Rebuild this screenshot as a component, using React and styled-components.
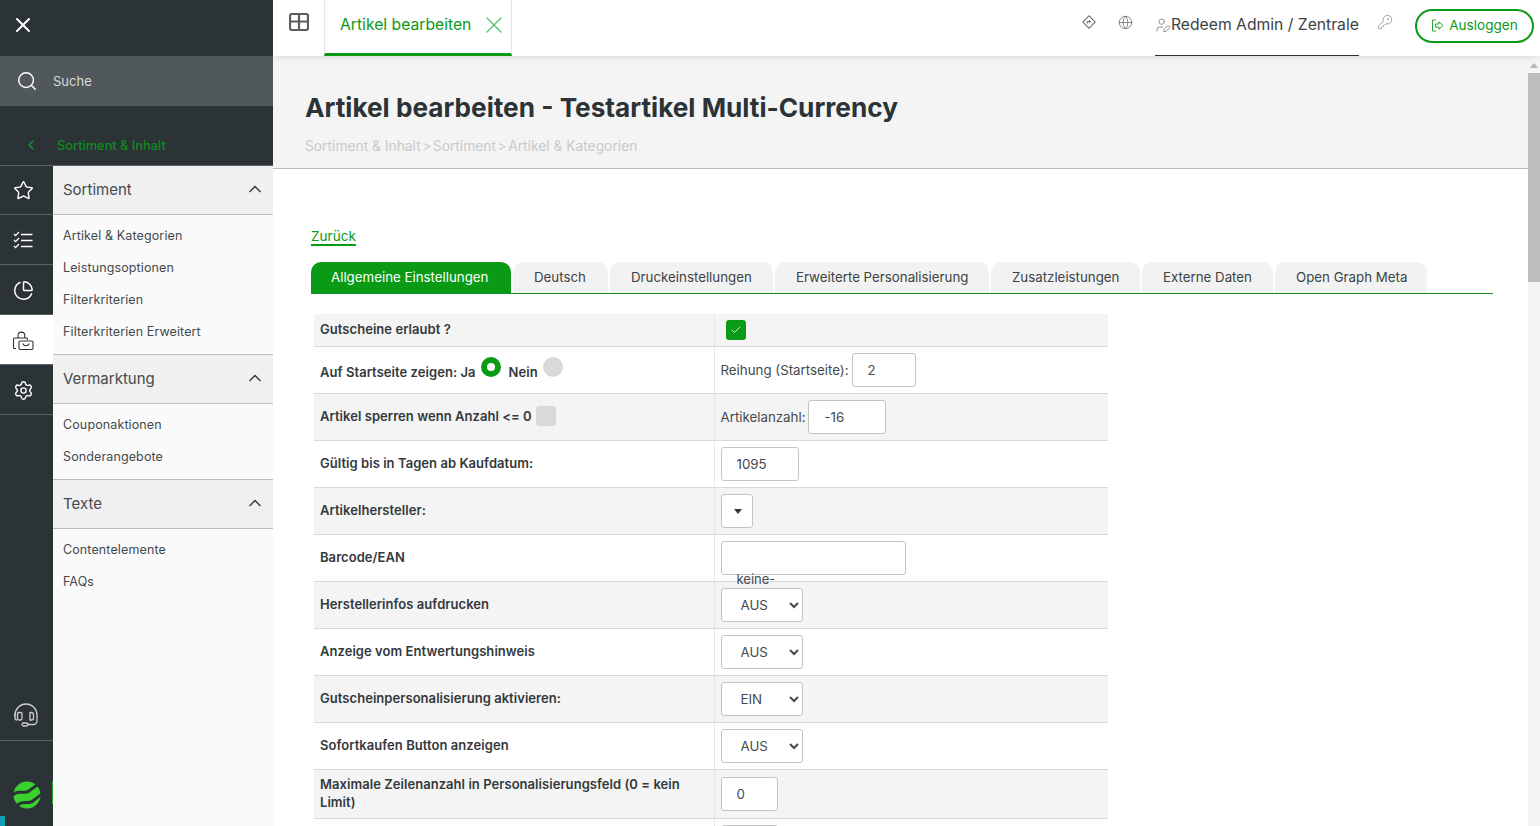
import React from "react";
import styled, { createGlobalStyle } from "styled-components";
import { X, Search, ChevronLeft, ChevronUp, Star, ChartPie, Settings, Globe, UserPen, KeyRound, Check } from "lucide-react";

const menu = [
  { title: "Sortiment", items: ["Artikel & Kategorien", "Leistungsoptionen", "Filterkriterien", "Filterkriterien Erweitert"] },
  { title: "Vermarktung", items: ["Couponaktionen", "Sonderangebote"] },
  { title: "Texte", items: ["Contentelemente", "FAQs"] },
];

const tabs = [
  { label: "Allgemeine Einstellungen", width: 200 },
  { label: "Deutsch", width: 95 },
  { label: "Druckeinstellungen", width: 163 },
  { label: "Erweiterte Personalisierung", width: 214 },
  { label: "Zusatzleistungen", width: 149 },
  { label: "Externe Daten", width: 131 },
  { label: "Open Graph Meta", width: 152 },
];

const ChecklistIcon = () => (
  <svg width="20" height="20" viewBox="0 0 20 20" fill="none" stroke="#fff" strokeWidth="1.3">
    <path d="M1 3l1.6 1.6L6 1M1 9l1.6 1.6L6 7M1 15l1.6 1.6L6 13" />
    <path d="M8 3.5h11.5M8 9.5h11.5M8 15.5h11.5" />
  </svg>
);

const BagIcon = () => (
  <svg width="24" height="24" viewBox="0 0 24 24" fill="none" stroke="#2b3336" strokeWidth="1.1">
    <path d="M7 9V6.5a3.4 3.4 0 0 1 6.8 0V9" />
    <path d="M5 19.5H3.5a1 1 0 0 1-1-1V10a1 1 0 0 1 1-1h12a1 1 0 0 1 1 1v1" />
    <rect x="8" y="12" width="14" height="8.5" rx="1.2" />
    <path d="M12 14.5c.4 3 5.6 3 6 0" />
  </svg>
);

const HeadsetIcon = () => (
  <svg width="28" height="28" viewBox="0 0 28 28" fill="none" stroke="#c9cccd" strokeWidth="1.3">
    <path d="M3 15v-2a11 11 0 0 1 22 0v6a3.5 3.5 0 0 1-3.5 3.5H15" />
    <rect x="5.5" y="10.5" width="4.5" height="7.5" rx="1.5" />
    <path d="M18 10.5h1.5a2 2 0 0 1 2 2V16a2 2 0 0 1-2 2H18z" />
    <path d="M3 11v5a2 2 0 0 0 2 2" />
    <rect x="10" y="21" width="6" height="3" rx="1.5" />
  </svg>
);

const LogoMark = () => (
  <svg width="28" height="28" viewBox="0 0 28 28">
    <circle cx="14" cy="14" r="13.5" fill="#3ad12e" />
    <path d="M-2 16C5 7 11 14 16 10S24 3 30 2" fill="none" stroke="#2b3336" strokeWidth="3" />
    <path d="M2 27C8 18 15 24 20 20S27 14 31 12" fill="none" stroke="#2b3336" strokeWidth="3" />
  </svg>
);

const TableIcon = () => (
  <svg width="20" height="18" viewBox="0 0 20 18" fill="none" stroke="#5c5c5c" strokeWidth="2.2">
    <rect x="1" y="1" width="18" height="16" rx="2" />
    <path d="M1 8.5h18M10 1v16" />
  </svg>
);

const DiamondIcon = () => (
  <svg width="14" height="14" viewBox="0 0 14 14" fill="none" stroke="#666" strokeWidth="1">
    <rect x="2.6" y="2.6" width="8.8" height="8.8" transform="rotate(45 7 7)" />
    <path d="M5.2 8.6V6.6h3.2M7.2 5.2l1.4 1.4-1.4 1.4" />
  </svg>
);

const LogoutIcon = () => (
  <svg width="13" height="13" viewBox="0 0 13 13" fill="none" stroke="#0a9a16" strokeWidth="0.9">
    <path d="M5 1H1.5v11H5" />
    <path d="M4.5 5h3.5V2.8L12 6.5l-4 3.7V8H4.5z" />
  </svg>
);

export default function App() {
  return (
    <>
      <GlobalStyle />
      <Shell>
        <Sidebar>
          <CloseRow>
            <X size={24} color="#fff" strokeWidth={2} />
          </CloseRow>
          <SearchRow>
            <Search size={22} color="#fff" strokeWidth={1.6} />
            <SearchLabel>Suche</SearchLabel>
          </SearchRow>
          <BackRow>
            <ChevronLeft size={16} color="#1a9c2e" strokeWidth={1.6} />
            <BackLabel>Sortiment &amp; Inhalt</BackLabel>
          </BackRow>
          <SideBody>
            <Rail>
              <RailItem><Star size={21} color="#fff" strokeWidth={1.6} /></RailItem>
              <RailItem><ChecklistIcon /></RailItem>
              <RailItem><ChartPie size={21} color="#fff" strokeWidth={1.7} /></RailItem>
              <RailItem $active><BagIcon /></RailItem>
              <RailItem><Settings size={21} color="#fff" strokeWidth={1.6} /></RailItem>
              <HeadsetItem><HeadsetIcon /></HeadsetItem>
              <LogoBlock>
                <LogoMark />
                <LogoCut />
              </LogoBlock>
              <CornerMark />
            </Rail>
            <Panel>
              {menu.map((section) => (
                <section key={section.title}>
                  <PanelHead>
                    {section.title}
                    <ChevronUp size={20} color="#444" strokeWidth={2} />
                  </PanelHead>
                  <PanelList>
                    {section.items.map((item) => (
                      <PanelItem key={item}>{item}</PanelItem>
                    ))}
                  </PanelList>
                </section>
              ))}
            </Panel>
          </SideBody>
        </Sidebar>

        <Main>
          <Topbar>
            <GridButton><TableIcon /></GridButton>
            <OpenTab>
              Artikel bearbeiten
              <X size={28} color="#55c06a" strokeWidth={1.1} />
            </OpenTab>
            <TopRight>
              <TopIcon><DiamondIcon /></TopIcon>
              <TopIcon><Globe size={15} color="#666" strokeWidth={1.2} /></TopIcon>
              <UserBox>
                <UserPen size={16} color="#777" strokeWidth={1.2} />
                Redeem Admin / Zentrale
              </UserBox>
              <KeyBox><KeyRound size={16} color="#888" strokeWidth={1.1} /></KeyBox>
              <LogoutButton>
                <LogoutIcon />
                Ausloggen
              </LogoutButton>
            </TopRight>
          </Topbar>

          <Page>
            <PageHead>
              <Title>Artikel bearbeiten - Testartikel Multi-Currency</Title>
              <Crumbs>
                Sortiment &amp; Inhalt<CrumbSep>&gt;</CrumbSep>Sortiment<CrumbSep>&gt;</CrumbSep>Artikel &amp; Kategorien
              </Crumbs>
            </PageHead>

            <Content>
              <BackLink href="#">Zurück</BackLink>
              <TabBar>
                {tabs.map((tab, i) => (
                  <Tab key={tab.label} $active={i === 0} $w={tab.width}>{tab.label}</Tab>
                ))}
              </TabBar>

              <FormTable>
                <tbody>
                  <ShortRow>
                    <LabelCell>Gutscheine erlaubt ?</LabelCell>
                    <ValueCell><CheckBox $on><Check size={12} color="#fff" strokeWidth={1.6} /></CheckBox></ValueCell>
                  </ShortRow>
                  <tr>
                    <LabelCell>
                      <RadioLine>
                        <span>Auf Startseite zeigen: Ja</span>
                        <Radio $on />
                        <span>Nein</span>
                        <Radio />
                      </RadioLine>
                    </LabelCell>
                    <ValueCell>
                      <FieldLine>Reihung (Startseite):<Field $w={64} defaultValue="2" /></FieldLine>
                    </ValueCell>
                  </tr>
                  <tr>
                    <LabelCell>
                      <FieldLine>Artikel sperren wenn Anzahl &lt;= 0 <CheckBox /></FieldLine>
                    </LabelCell>
                    <ValueCell>
                      <FieldLine>Artikelanzahl:<Field $w={78} defaultValue="-16" /></FieldLine>
                    </ValueCell>
                  </tr>
                  <tr>
                    <LabelCell>Gültig bis in Tagen ab Kaufdatum:</LabelCell>
                    <ValueCell><Field $w={78} defaultValue="1095" /></ValueCell>
                  </tr>
                  <tr>
                    <LabelCell>Artikelhersteller:</LabelCell>
                    <ValueCell><EmptySelect /></ValueCell>
                  </tr>
                  <tr>
                    <LabelCell>Barcode/EAN</LabelCell>
                    <ValueCell><Field $w={185} defaultValue="" /></ValueCell>
                  </tr>
                  <tr>
                    <LabelCell>Herstellerinfos aufdrucken</LabelCell>
                    <ValueCell>
                      <StrayLabel>keine-</StrayLabel>
                      <Select defaultValue="AUS"><option>AUS</option><option>EIN</option></Select>
                    </ValueCell>
                  </tr>
                  <tr>
                    <LabelCell>Anzeige vom Entwertungshinweis</LabelCell>
                    <ValueCell><Select defaultValue="AUS"><option>AUS</option><option>EIN</option></Select></ValueCell>
                  </tr>
                  <tr>
                    <LabelCell>Gutscheinpersonalisierung aktivieren:</LabelCell>
                    <ValueCell><Select defaultValue="EIN"><option>AUS</option><option>EIN</option></Select></ValueCell>
                  </tr>
                  <tr>
                    <LabelCell>Sofortkaufen Button anzeigen</LabelCell>
                    <ValueCell><Select defaultValue="AUS"><option>AUS</option><option>EIN</option></Select></ValueCell>
                  </tr>
                  <TallRow>
                    <LabelCell>Maximale Zeilenanzahl in Personalisierungsfeld (0 = kein Limit)</LabelCell>
                    <ValueCell><Field $w={57} defaultValue="0" /></ValueCell>
                  </TallRow>
                  <tr>
                    <LabelCell />
                    <ValueCell><Field $w={57} defaultValue="" /></ValueCell>
                  </tr>
                </tbody>
              </FormTable>
            </Content>

            <ScrollTrack>
              <ScrollArrow />
              <ScrollThumb />
            </ScrollTrack>
          </Page>
        </Main>
      </Shell>
    </>
  );
}

const GlobalStyle = createGlobalStyle`
  html, body {
    margin: 0;
    height: 100%;
    overflow: hidden;
  }
  body {
    font-family: Inter, "Liberation Sans", sans-serif;
    color: #2b3336;
    background: #fff;
  }
  * {
    box-sizing: border-box;
  }
`;

const Shell = styled.div`
  display: flex;
  height: 826px;
  overflow: hidden;
`;

const Sidebar = styled.aside`
  width: 273px;
  flex: none;
  display: flex;
  flex-direction: column;
  background: #2b3336;
  z-index: 2;
`;

const CloseRow = styled.div`
  height: 56px;
  display: flex;
  align-items: center;
  padding: 0 0 6px 11px;
`;

const SearchRow = styled.div`
  height: 50px;
  display: flex;
  align-items: center;
  gap: 15px;
  padding-left: 16px;
  background: #51585b;
`;

const SearchLabel = styled.span`
  color: #d6d8d9;
  font-size: 13px;
`;

const BackRow = styled.div`
  height: 60px;
  display: flex;
  align-items: flex-end;
  gap: 18px;
  padding: 0 0 12px 23px;
  border-bottom: 1px solid #5a6164;
`;

const BackLabel = styled.span`
  color: #0f8a1f;
  font-size: 12.8px;
  font-weight: 500;
`;

const SideBody = styled.div`
  flex: 1;
  display: flex;
  min-height: 0;
`;

const Rail = styled.nav`
  position: relative;
  width: 53px;
  flex: none;
  display: flex;
  flex-direction: column;
`;

const RailItem = styled.div`
  height: 50px;
  display: flex;
  align-items: center;
  justify-content: center;
  padding: 2px 7px 0 0;
  border-bottom: 1px solid #5a6164;
  background: ${(p) => (p.$active ? "#fff" : "transparent")};

  &:first-child {
    height: 49px;
    padding-top: 0;
  }
`;

const HeadsetItem = styled.div`
  margin-top: auto;
  height: 50px;
  display: flex;
  align-items: center;
  padding-left: 12px;
  border-bottom: 1px solid #5a6164;
`;

const LogoBlock = styled.div`
  height: 85px;
  display: flex;
  align-items: flex-start;
  justify-content: space-between;
  padding: 40px 0 0 13px;
`;

const LogoCut = styled.span`
  width: 1px;
  height: 23px;
  background: #2aa82a;
`;

const CornerMark = styled.span`
  position: absolute;
  left: 0;
  bottom: 0;
  width: 5px;
  height: 10px;
  background: #0e9fb8;
`;

const Panel = styled.div`
  flex: 1;
  background: radial-gradient(120% 100% at 40% 45%, #fafafa 75%, #ececec 100%);
`;

const PanelHead = styled.div`
  height: 49px;
  display: flex;
  align-items: center;
  justify-content: space-between;
  padding: 0 8px 2px 10px;
  background: #f0f0f0;
  border-bottom: 1px solid #bdbdbd;
  font-size: 15px;
  color: #444a4d;
`;

const PanelList = styled.div`
  display: flex;
  flex-direction: column;
  padding: 4px 0 7px;
  border-bottom: 1px solid #bdbdbd;

  section:last-child & {
    border-bottom: none;
  }
`;

const PanelItem = styled.a`
  height: 32px;
  display: flex;
  align-items: center;
  padding-left: 10px;
  font-size: 12.5px;
  letter-spacing: 0.12px;
  color: #444a4d;
`;

const Main = styled.div`
  flex: 1;
  min-width: 0;
  display: flex;
  flex-direction: column;
`;

const Topbar = styled.header`
  position: relative;
  z-index: 1;
  height: 56px;
  flex: none;
  display: flex;
  background: #fff;
  box-shadow: 0 1px 6px rgba(0, 0, 0, 0.12);
`;

const GridButton = styled.div`
  width: 51px;
  display: flex;
  justify-content: center;
  padding-top: 13px;
`;

const OpenTab = styled.div`
  width: 188px;
  display: flex;
  align-items: center;
  justify-content: space-between;
  padding: 0 3px 4px 15px;
  border: solid #e6e6e6;
  border-width: 0 1px;
  border-bottom: 3px solid #0a9a16;
  color: #0a9a16;
  font-size: 15.7px;
`;

const TopRight = styled.div`
  margin-left: auto;
  display: flex;
  align-items: stretch;
  padding-right: 6px;
`;

const TopIcon = styled.div`
  width: 36px;
  display: flex;
  justify-content: center;
  padding-top: 15px;
`;

const UserBox = styled.div`
  width: 204px;
  margin-left: 12px;
  display: flex;
  align-items: center;
  padding-bottom: 6px;
  border-bottom: 1px solid #2b3336;
  font-size: 15.7px;
  color: #3d4346;
  white-space: nowrap;
`;

const KeyBox = styled.div`
  width: 56px;
  padding: 14px 0 0 18px;
`;

const LogoutButton = styled.button`
  align-self: flex-start;
  width: 119px;
  height: 34px;
  margin-top: 9px;
  padding: 0 0 2px;
  display: flex;
  align-items: center;
  justify-content: center;
  gap: 5px;
  border: 2px solid #0a9a16;
  border-radius: 17px;
  background: #fff;
  color: #0a9a16;
  font-family: inherit;
  font-size: 13.6px;
`;

const Page = styled.main`
  position: relative;
  flex: 1;
  min-height: 0;
  overflow: hidden;
`;

const PageHead = styled.div`
  height: 113px;
  padding: 35px 0 0 32px;
  background: #f4f4f5;
  border-bottom: 1px solid #bdbdbd;
`;

const Title = styled.h1`
  margin: 0;
  font-size: 26.2px;
  line-height: 34px;
  font-weight: 700;
  color: #2b3336;
  white-space: nowrap;
`;

const Crumbs = styled.div`
  margin-top: 12px;
  font-size: 13.8px;
  line-height: 18px;
  color: #c9c9c9;
`;

const CrumbSep = styled.span`
  margin: 0 1.5px;
`;

const Content = styled.div`
  padding: 56px 47px 0 38px;
`;

const BackLink = styled.a`
  display: inline-block;
  color: #0a9a16;
  font-size: 13.6px;
  line-height: 16px;
  text-decoration: none;
  border-bottom: 2px solid #0a9a16;
`;

const TabBar = styled.div`
  margin-top: 16px;
  height: 32px;
  display: flex;
  gap: 2px;
  border-bottom: 1px solid #1d8a2a;
`;

const Tab = styled.div`
  width: ${(p) => p.$w}px;
  height: 31px;
  display: flex;
  align-items: center;
  padding: 0 0 1px ${(p) => (p.$active ? "20px" : "21px")};
  border-radius: 10px 10px 0 0;
  background: ${(p) => (p.$active ? "#0a9a16" : "#f2f2f2")};
  color: ${(p) => (p.$active ? "#fff" : "#3d4346")};
  font-size: 13.3px;
  white-space: nowrap;
`;

const FormTable = styled.table`
  width: 794px;
  margin: 20px 0 0 3px;
  border-collapse: collapse;
  table-layout: fixed;

  tr {
    height: 47px;
    border-bottom: 1px solid #d9d9d9;
  }
  tr:nth-child(odd) {
    background: #f4f4f4;
  }
`;

const ShortRow = styled.tr`
  && {
    height: 32px;
  }
`;

const TallRow = styled.tr`
  && {
    height: 49px;
  }
`;

const LabelCell = styled.td`
  width: 400px;
  padding: 1px 30px 3px 6px;
  border-right: 1px solid #e6e6e6;
  font-size: 13px;
  letter-spacing: 0.05px;
  line-height: 18px;
  font-weight: 600;
  color: #33393c;
`;

const ValueCell = styled.td`
  position: relative;
  padding: 0 6px;
  font-size: 13.3px;
  color: #444a4d;
`;

const FieldLine = styled.div`
  display: flex;
  align-items: center;
  gap: 3px;
`;

const RadioLine = styled.div`
  display: flex;
  align-items: flex-start;
  gap: 5px;
  padding-top: 6px;
  white-space: pre;
`;

const Radio = styled.span`
  width: 20px;
  height: 20px;
  margin: -6px 3px 0 0;
  border-radius: 50%;
  background: ${(p) => (p.$on ? "#fff" : "#d9d9d9")};
  border: ${(p) => (p.$on ? "6px solid #0a9a16" : "none")};
`;

const CheckBox = styled.span`
  width: 20px;
  height: 20px;
  display: flex;
  align-items: center;
  justify-content: center;
  border-radius: 3px;
  background: ${(p) => (p.$on ? "#0a9a16" : "#d9d9d9")};
  margin-left: ${(p) => (p.$on ? "5px" : "1px")};
`;

const Field = styled.input`
  display: block;
  width: ${(p) => p.$w}px;
  height: 34px;
  padding: 0 15px;
  border: 1px solid #c4c4c4;
  border-radius: 3px;
  background: #fff;
  color: #444a4d;
  font-family: inherit;
  font-size: 13.3px;
`;

const Select = styled.select`
  display: block;
  width: 82px;
  height: 34px;
  padding: 0 0 0 15px;
  border: 1px solid #c4c4c4;
  border-radius: 3px;
  background-color: #fff;
  color: #444a4d;
  font-family: inherit;
  font-size: 13.3px;
`;

const EmptySelect = styled.div`
  position: relative;
  width: 32px;
  height: 34px;
  border: 1px solid #c4c4c4;
  border-radius: 3px;
  background: #fff;

  &::after {
    content: "";
    position: absolute;
    left: 12px;
    top: 14px;
    border: 4px solid transparent;
    border-top: 5px solid #33393c;
    border-bottom: 0;
  }
`;

const StrayLabel = styled.span`
  position: absolute;
  left: 22px;
  top: -11px;
  font-size: 13px;
  line-height: 16px;
`;

const ScrollTrack = styled.div`
  position: absolute;
  top: 0;
  right: 0;
  bottom: 0;
  width: 12px;
  background: #f5f5f5;
`;

const ScrollArrow = styled.div`
  width: 0;
  margin: 7px auto 0;
  border: 4px solid transparent;
  border-bottom: 5px solid #b5b5b5;
  border-top: 0;
`;

const ScrollThumb = styled.div`
  height: 209px;
  margin-top: 5px;
  background: #bdbdbd;
`;
